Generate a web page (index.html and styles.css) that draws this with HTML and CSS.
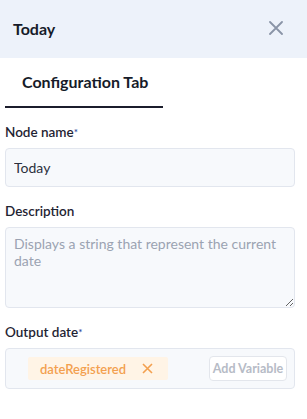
FILE: index.html
```html
<!DOCTYPE html>
<html lang="en">
<head>
    <meta charset="UTF-8">
    <meta name="viewport" content="width=device-width, initial-scale=1.0">
    <title>Today</title>
    <link rel="stylesheet" href="styles.css">
</head>
<body>
    <div class="panel">
        <div class="panel-header">
            <h1 class="panel-title">Today</h1>
            <button class="close-button" aria-label="Close">
                <svg width="14" height="14" viewBox="0 0 14 14">
                    <path d="M1 1 L13 13 M13 1 L1 13" stroke="#8a94a7" stroke-width="1.8" fill="none" stroke-linecap="round"/>
                </svg>
            </button>
        </div>

        <div class="tabs">
            <div class="tab active">Configuration Tab</div>
        </div>

        <div class="form">
            <div class="field">
                <label for="node-name">Node name<span class="req">*</span></label>
                <input type="text" id="node-name" value="Today" />
            </div>

            <div class="field">
                <label for="description">Description</label>
                <textarea id="description" placeholder="Displays a string that represent the current date"></textarea>
            </div>

            <div class="field">
                <label>Output date<span class="req">*</span></label>
                <div class="variable-box">
                    <span class="chip">
                        dateRegistered
                        <svg width="11" height="11" viewBox="0 0 11 11">
                            <path d="M1 1 L10 10 M10 1 L1 10" stroke="#f3a04f" stroke-width="1.6" fill="none"/>
                        </svg>
                    </span>
                    <button class="add-variable">Add Variable</button>
                </div>
            </div>
        </div>
    </div>
</body>
</html>
```

FILE: styles.css
```css
body {
    margin: 0;
    font-family: Lato, "Noto Sans", sans-serif;
    background: #fff;
    color: #1c2130;
}

.panel-header {
    height: 58px;
    background: #edf2fa;
    display: flex;
    align-items: center;
    justify-content: space-between;
    padding: 0 22px 0 13px;
    box-sizing: border-box;
}

.panel-title {
    margin: 0;
    font-size: 16px;
    font-weight: 700;
    color: #161b29;
    padding-bottom: 2px;
}

.close-button {
    border: none;
    background: none;
    padding: 0;
    width: 18px;
    height: 18px;
    display: flex;
    align-items: center;
    justify-content: center;
    cursor: pointer;
    margin-bottom: 2px;
}

.tabs {
    padding: 0 5px;
    display: flex;
}

.tab {
    width: 158px;
    box-sizing: border-box;
    padding: 0 0 0 17px;
    height: 50px;
    line-height: 48px;
    font-size: 16px;
    font-weight: 700;
    color: #161b29;
}

.tab.active {
    border-bottom: 2px solid #1b1d2c;
}

.form {
    padding: 16px 12px 0 5px;
    display: flex;
    flex-direction: column;
    gap: 16px;
}

.field {
    display: flex;
    flex-direction: column;
    gap: 8px;
}

label {
    font-size: 13.5px;
    line-height: 16px;
    font-weight: 600;
    color: #1f2433;
}

.req {
    color: #2f4a9e;
    font-size: 10px;
    vertical-align: top;
}

input[type="text"],
textarea {
    width: 100%;
    box-sizing: border-box;
    border: 1px solid #e2e6ee;
    border-radius: 4px;
    background: #f7f9fc;
    font-family: inherit;
    font-size: 14px;
    color: #2b303d;
}

input[type="text"] {
    height: 39px;
    padding: 0 8px;
}

textarea {
    height: 81px;
    padding: 7px 8px;
    line-height: 17px;
    resize: vertical;
}

textarea::placeholder {
    color: #9ba3b2;
}

.variable-box {
    height: 41px;
    box-sizing: border-box;
    border: 1px solid #e2e6ee;
    border-radius: 4px;
    background: #f7f9fc;
    display: flex;
    align-items: center;
    justify-content: space-between;
    padding: 0 7px 0 22px;
}

.chip {
    height: 23px;
    width: 140px;
    box-sizing: border-box;
    background: #fff4e6;
    color: #f3a04f;
    font-size: 13px;
    font-weight: 600;
    display: flex;
    align-items: center;
    gap: 16px;
    padding: 0 0 0 12px;
    border-radius: 2px;
}

.add-variable {
    height: 25px;
    width: 78px;
    box-sizing: border-box;
    border: 1px solid #e3e6ec;
    border-radius: 4px;
    background: #fff;
    color: #b6bbc6;
    font-family: inherit;
    font-size: 12.5px;
    font-weight: 700;
    padding: 0;
    cursor: pointer;
}
```
